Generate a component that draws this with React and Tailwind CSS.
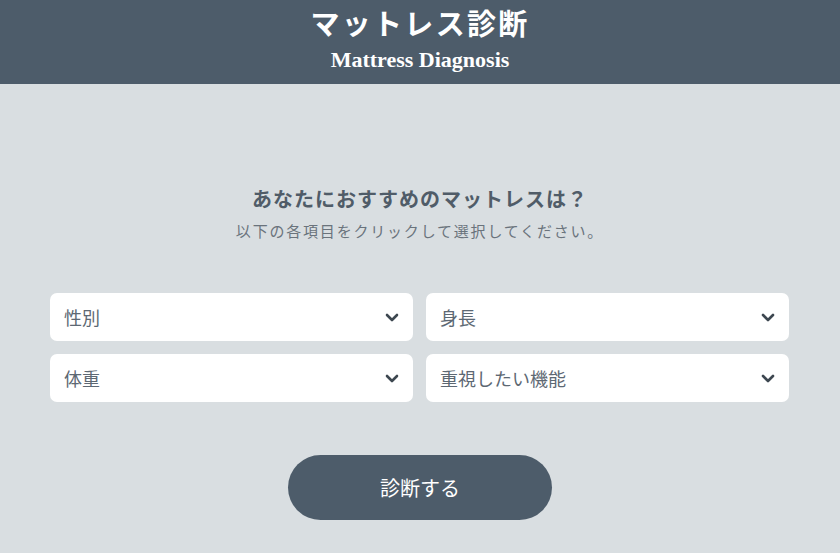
const fields = ['性別', '身長', '体重', '重視したい機能'];

function Chevron() {
  return (
    <svg width="14" height="9" viewBox="0 0 14 9" fill="none" className="text-[#3d4750]">
      <path d="M2 2l5 5 5-5" stroke="currentColor" strokeWidth="2.6" strokeLinecap="round" strokeLinejoin="round" />
    </svg>
  );
}

function SelectBox({ label }) {
  return (
    <div className="flex h-12 items-center justify-between rounded-[7px] bg-white pl-[14px] pr-[14px]">
      <span className="text-[18px] text-[#5d6873]">{label}</span>
      <Chevron />
    </div>
  );
}

export default function App() {
  return (
    <div
      className="min-h-[553px] bg-[#d9dee1]"
      style={{ fontFamily: '"Noto Sans CJK JP", "Noto Sans", sans-serif' }}
    >
      <header
        className="flex h-[84px] flex-col items-center bg-[#4d5c6a] pt-[4px] text-white"
        style={{ fontFamily: '"Liberation Serif", "Noto Sans CJK JP", serif' }}
      >
        <h1 className="text-[29px] font-bold leading-[42px] tracking-[0.08em]">マットレス診断</h1>
        <p className="text-[22px] font-bold leading-[28px]">Mattress Diagnosis</p>
      </header>

      <div className="flex flex-col items-center pt-[100px]">
        <h2 className="text-[20px] font-bold leading-[30px] tracking-[0.05em] text-[#505c68]">
          あなたにおすすめのマットレスは？
        </h2>
        <p className="mt-[6px] text-[15px] leading-[22px] tracking-[0.12em] text-[#6a737c]">
          以下の各項目をクリックして選択してください。
        </p>
      </div>

      <div className="ml-[50px] mr-[51px] mt-[51px] grid grid-cols-2 gap-x-[13px] gap-y-[13px]">
        {fields.map((f) => (
          <SelectBox key={f} label={f} />
        ))}
      </div>

      <div className="flex justify-center pt-[53px]">
        <button className="h-[65px] w-[264px] rounded-full bg-[#4d5c6a] text-[20px] text-white">
          診断する
        </button>
      </div>
    </div>
  );
}
